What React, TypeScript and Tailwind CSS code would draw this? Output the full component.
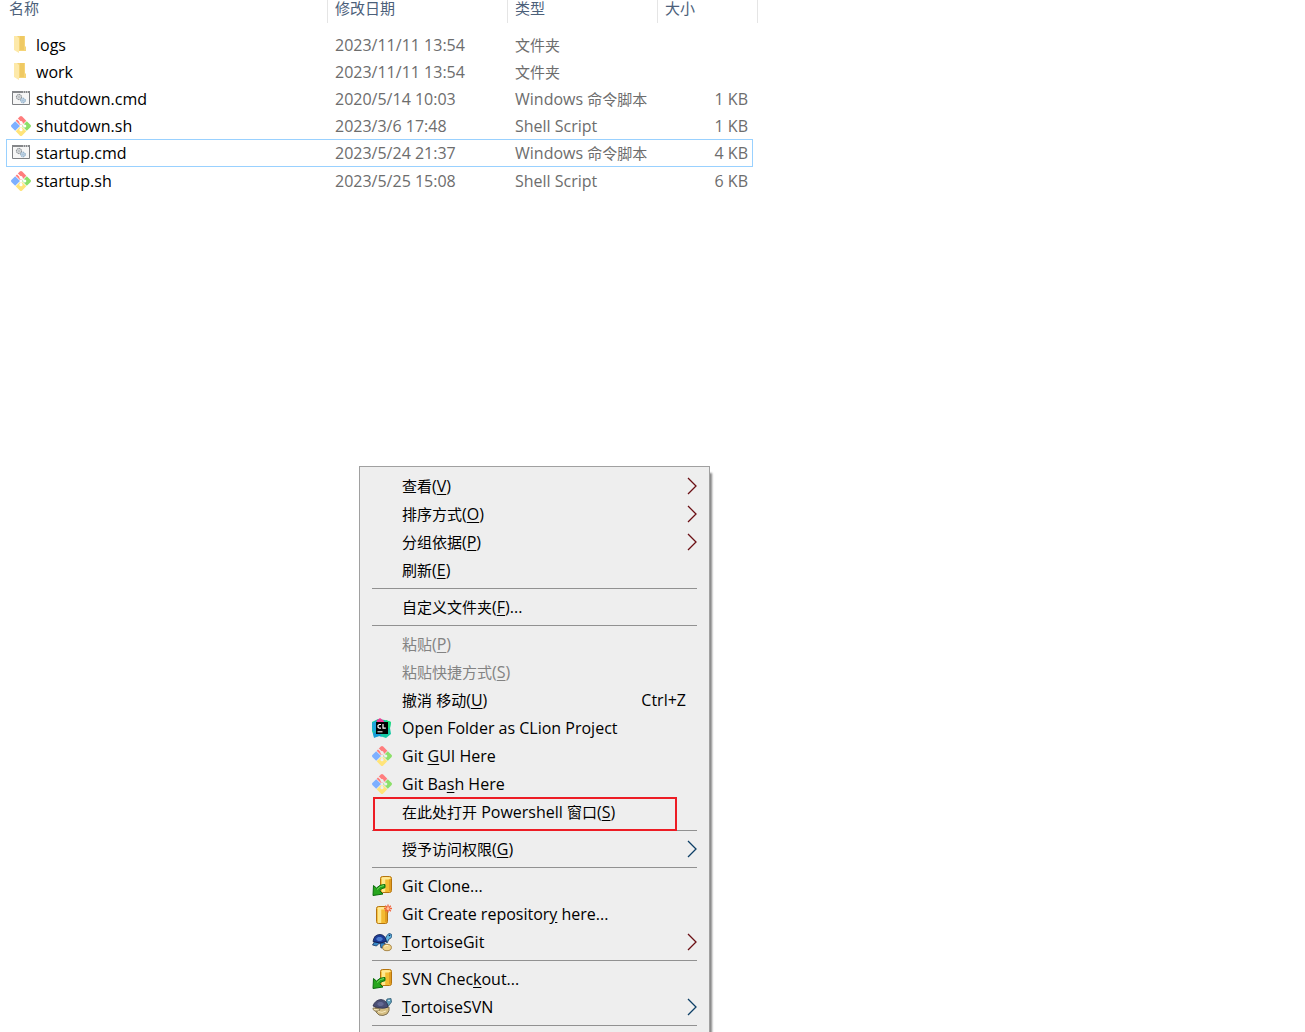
import React from "react";

type IconName = "folder" | "cmd" | "git" | "clion" | "clone" | "create" | "tortoisegit" | "tortoisesvn";

interface FileEntry {
    icon: IconName;
    name: string;
    date: string;
    type: string;
    size: string;
    selected?: boolean;
}

interface MenuEntry {
    // "&" marks the access key
    label: string;
    icon?: IconName;
    shortcut?: string;
    submenu?: "red" | "blue";
    disabled?: boolean;
    highlighted?: boolean;
}

const files: FileEntry[] = [
    { icon: "folder", name: "logs", date: "2023/11/11 13:54", type: "文件夹", size: "" },
    { icon: "folder", name: "work", date: "2023/11/11 13:54", type: "文件夹", size: "" },
    { icon: "cmd", name: "shutdown.cmd", date: "2020/5/14 10:03", type: "Windows 命令脚本", size: "1 KB" },
    { icon: "git", name: "shutdown.sh", date: "2023/3/6 17:48", type: "Shell Script", size: "1 KB" },
    { icon: "cmd", name: "startup.cmd", date: "2023/5/24 21:37", type: "Windows 命令脚本", size: "4 KB", selected: true },
    { icon: "git", name: "startup.sh", date: "2023/5/25 15:08", type: "Shell Script", size: "6 KB" },
];

const menuGroups: MenuEntry[][] = [
    [
        { label: "查看(&V)", submenu: "red" },
        { label: "排序方式(&O)", submenu: "red" },
        { label: "分组依据(&P)", submenu: "red" },
        { label: "刷新(&E)" },
    ],
    [{ label: "自定义文件夹(&F)..." }],
    [
        { label: "粘贴(&P)", disabled: true },
        { label: "粘贴快捷方式(&S)", disabled: true },
        { label: "撤消 移动(&U)", shortcut: "Ctrl+Z" },
        { label: "Open Folder as CLion Project", icon: "clion" },
        { label: "Git &GUI Here", icon: "git" },
        { label: "Git Ba&sh Here", icon: "git" },
        { label: "在此处打开 Powershell 窗口(&S)", highlighted: true },
    ],
    [{ label: "授予访问权限(&G)", submenu: "blue" }],
    [
        { label: "Git Clone...", icon: "clone" },
        { label: "Git Create repositor&y here...", icon: "create" },
        { label: "&TortoiseGit", icon: "tortoisegit", submenu: "red" },
    ],
    [
        { label: "SVN Chec&kout...", icon: "clone" },
        { label: "&TortoiseSVN", icon: "tortoisesvn", submenu: "blue" },
    ],
];

const FolderIcon = () => (
    <svg width="20" height="20" viewBox="0 0 20 20" aria-hidden="true">
        <path d="M5 1h9v10l1 1v4H5z" fill="#f5d477" />
        <path d="M9 1h4v14H9z" fill="#efc963" />
        <path d="M3 1h3l2 2v15l-5-3z" fill="#fde9a9" />
    </svg>
);

const CmdIcon = () => (
    <svg width="20" height="20" viewBox="0 1 20 20" aria-hidden="true">
        <path d="M1.5 3.5h17v13h-17z" fill="#f6f6f6" stroke="#7d7f82" />
        <path d="M1 3h18v2H1z" fill="#85878a" />
        <path d="M12 4h1M14 4h1M16 4h1" stroke="#fff" />
        <circle cx="8" cy="9" r="2.6" fill="#dfe3e6" stroke="#777c80" strokeDasharray="1.4 .6" />
        <circle cx="8" cy="9" r="1" fill="#fff" stroke="#8b9094" strokeWidth=".6" />
        <circle cx="12" cy="12.5" r="2.3" fill="#d3e4f2" stroke="#6f94b5" strokeDasharray="1.3 .6" />
        <circle cx="12" cy="12.5" r=".8" fill="#fff" stroke="#6f94b5" strokeWidth=".6" />
    </svg>
);

const GitIcon = () => (
    <svg width="20" height="20" viewBox="0 0 20 20" aria-hidden="true">
        <mask id="git-branch">
            <path d="M0 0h20v20H0z" fill="#fff" />
            <path d="M6 2.500 10 6.500v7.500M10 6.500l4 4" fill="none" stroke="#000" strokeWidth="1.200" />
            <circle cx="10" cy="6.500" r="1.600" />
            <circle cx="10" cy="13.700" r="1.600" />
            <circle cx="13.700" cy="10" r="1.600" />
        </mask>
        <g mask="url(#git-branch)">
            <path d="M8.800.6q1.200-1.200 2.400 0L15.300 4.700 11 9H9L4.700 4.700z" fill="#ff7d7d" />
            <path d="M4.200 5.200 9 10l-4.800 4.800L.6 11.200q-1.200-1.200 0-2.400z" fill="#7eb0ff" />
            <path d="m15.800 5.200 3.600 3.600q1.200 1.200 0 2.400l-3.600 3.600L11 10z" fill="#8ce06a" />
            <path d="M4.700 15.300 9 11h2l4.300 4.300-4.100 4.100q-1.200 1.200-2.400 0z" fill="#ffe47a" />
        </g>
    </svg>
);

const CLionIcon = () => (
    <svg width="20" height="20" viewBox="0 0 20 20" aria-hidden="true">
        <path d="m0 4 6-3 7 1 6 2-1 6 1 6-5 4-6-2-6 1-2-6z" fill="#16c9a4" />
        <path d="m4 3 4-3 4 3v3H5z" fill="#ef3c96" />
        <path d="m0 5 5-2v9l-4 2z" fill="#20a5de" />
        <path d="m14 2 5 2-1 6h-4z" fill="#1fdc7d" />
        <path d="m1 15 5-2 4 6-3-1-5 2z" fill="#179bd8" />
        <path d="M4 4h12v12H4z" fill="#000" />
        <path d="M9 6.5H7.2l-1.2 1v1.7l1.2 1H9M11 6v4.2h2.8" fill="none" stroke="#fff" strokeWidth="1.2" />
        <path d="M5.5 13.8h5" stroke="#fff" />
    </svg>
);

const Cylinder = ({ x, y, height }: { x: number; y: number; height: number }) => (
    <g transform={`translate(${x} ${y})`}>
        <rect x=".5" y=".5" width="11" height={height} rx="2" fill="#f4bb31" stroke="#b5740e" />
        <path d={`M3.500 2v${height - 2}`} stroke="#ffe78c" strokeWidth="3.500" />
        <path d={`M10 3v${height - 4}`} stroke="#d9901a" strokeWidth="1.4" />
        <ellipse cx="6" cy="2.2" rx="4.6" ry="1.3" fill="#ffe995" />
    </g>
);

const CloneIcon = () => (
    <svg width="20" height="20" viewBox="0 0 20 20" aria-hidden="true">
        <Cylinder x={8} y={0} height={16} />
        <path
            d="m1.5 9.5 3 2.6q3-3.800 8.500-3.600v3.200q-3.500.2-5.300 3l3.300 3.300-10 1.500z"
            fill="#27a61d"
            stroke="#0a6c0b"
        />
        <path d="M5 13.500q3-3.800 7-4" fill="none" stroke="#7bdc5f" />
    </svg>
);

const CreateIcon = () => (
    <svg width="20" height="20" viewBox="0 0 20 20" aria-hidden="true">
        <Cylinder x={4} y={2} height={17} />
        <path d="M16 .5v8M12 4.500h8M13.200 1.700l5.600 5.600M18.800 1.700l-5.600 5.600" stroke="#f0643c" strokeWidth="1.3" />
        <circle cx="16" cy="4.5" r="1.5" fill="#ffc4a0" />
    </svg>
);

const TortoiseGitIcon = () => (
    <svg width="20" height="20" viewBox="0 0 20 20" aria-hidden="true">
        <path d="m3 9-2.500 4 4 1 3-3zM8 11l1 5 4-1v-4z" fill="#3586c5" stroke="#15345f" strokeWidth=".8" />
        <path d="M13 8q1-5 4-6.500 3 0 3 2.500-1 3-3 3l-2 4z" fill="#63b7e0" stroke="#17406f" strokeWidth=".8" />
        <path d="M1 9.500q1-7 7-7 5 0 6.500 7Q8 12.500 1 9.500z" fill="#1c3c96" stroke="#0b1643" strokeWidth=".8" />
        <path d="m4 7 2-2h3l2 2-2 2H6z" fill="#4a7bd0" />
        <circle cx="17.500" cy="3.500" r=".8" fill="#102040" />
        <ellipse cx="15" cy="15.5" rx="4.400" ry="3.200" fill="#f2d58d" stroke="#97712d" strokeWidth=".8" />
        <path d="M12.500 14.500q1.500-1.500 3.500-1" fill="none" stroke="#fff2c6" />
    </svg>
);

const TortoiseSvnIcon = () => (
    <svg width="20" height="20" viewBox="0 0 20 20" aria-hidden="true">
        <path d="M3 10h14q1 4-2 7-4 2.500-8 1-4-2-4-8z" fill="#d4bd83" stroke="#685a3d" strokeWidth=".8" />
        <path d="M1 11q-.5 2 2 3h4l1-2z" fill="#f0e0b0" stroke="#7c6a42" strokeWidth=".8" />
        <path d="m14 5 1-3 4-.5.5 3.500-3 4z" fill="#5c9eb9" stroke="#315c75" strokeWidth=".8" />
        <path d="M1 9q2-6 8-6.500Q15 3 16 10q-6 3-15-1z" fill="#4a4f75" stroke="#292c49" strokeWidth=".8" />
        <path d="m5 7 2-2h3l2 2-2 2H7z" fill="#646a94" />
        <path d="M6 14.500q4 2 8-.5" fill="none" stroke="#f7e9bd" />
        <circle cx="17" cy="3.5" r=".8" fill="#fff" />
    </svg>
);

const icons: Record<IconName, React.FC> = {
    folder: FolderIcon,
    cmd: CmdIcon,
    git: GitIcon,
    clion: CLionIcon,
    clone: CloneIcon,
    create: CreateIcon,
    tortoisegit: TortoiseGitIcon,
    tortoisesvn: TortoiseSvnIcon,
};

// Chinese runs are set one pixel smaller than the Latin text around them
const Mixed = ({ text }: { text: string }) => (
    <>
        {text.split(/([\u4e00-\u9fff]+)/).map((part, i) =>
            i % 2 ? <span key={i} className="text-[15px]">{part}</span> : part
        )}
    </>
);

const MenuLabel = ({ label }: { label: string }) => {
    const at = label.indexOf("&");
    if (at < 0) return <Mixed text={label} />;
    return (
        <>
            <Mixed text={label.slice(0, at)} />
            <span className="underline underline-offset-2">{label[at + 1]}</span>
            {label.slice(at + 2)}
        </>
    );
};

const FileList = () => (
    <table className="ml-[6px] w-[752px] table-fixed border-separate border-spacing-0 text-left leading-5 text-[#6d6d6d]">
        <colgroup>
            <col className="w-[322px]" />
            <col className="w-[180px]" />
            <col className="w-[150px]" />
            <col className="w-[95px]" />
            <col className="w-[5px]" />
        </colgroup>
        <thead className="text-[15px] text-[#4c607a]">
            <tr className="h-[23px] align-top">
                <th className="border-r border-[#e5e5e5] pl-[3px] font-normal leading-4">名称</th>
                <th className="border-r border-[#e5e5e5] pl-[7px] font-normal leading-4">修改日期</th>
                <th className="border-r border-[#e5e5e5] pl-[7px] font-normal leading-4">类型</th>
                <th colSpan={2} className="border-r border-[#e5e5e5] pl-[7px] font-normal leading-4">大小</th>
            </tr>
        </thead>
        <tbody>
            <tr className="h-2" aria-hidden="true">
                <td colSpan={5} />
            </tr>
            {files.map((file) => {
                const Icon = icons[file.icon];
                const edge = file.selected ? "border-y border-[#99d1ff]" : "";
                return (
                    <tr key={file.name} className={file.selected ? "h-7" : "h-[27px]"}>
                        <td className={`${edge} ${file.selected ? "border-l pl-1" : "pl-[5px]"} text-black`}>
                            <span className="flex items-center gap-[5px]">
                                <Icon />
                                {file.name}
                            </span>
                        </td>
                        <td className={`${edge} pl-[7px]`}>{file.date}</td>
                        <td className={`${edge} pl-[7px]`}>
                            <Mixed text={file.type} />
                        </td>
                        <td className={`${edge} ${file.selected ? "border-r pr-1" : "pr-[5px]"} text-right`}>{file.size}</td>
                        <td />
                    </tr>
                );
            })}
        </tbody>
    </table>
);

const MenuItem = ({ item }: { item: MenuEntry }) => {
    const Icon = item.icon ? icons[item.icon] : null;
    return (
        <li role="none" className="relative">
            <button
                type="button"
                role="menuitem"
                disabled={item.disabled}
                aria-haspopup={item.submenu ? "menu" : undefined}
                className="flex h-7 w-full items-center px-3 text-left leading-5 text-black disabled:text-[#838383]"
            >
                <span className="mr-[10px] h-5 w-5 shrink-0">{Icon && <Icon />}</span>
                <span className="flex-1 whitespace-nowrap">
                    <MenuLabel label={item.label} />
                </span>
                {item.shortcut && <span className="pr-[11px]">{item.shortcut}</span>}
                {item.submenu && (
                    <svg width="10" height="18" viewBox="0 0 10 18" fill="none" aria-hidden="true">
                        <path
                            d="m1 1 8 8-8 8"
                            stroke={item.submenu === "red" ? "#6b0f14" : "#0d3f66"}
                            strokeWidth="1.3"
                        />
                    </svg>
                )}
            </button>
            {item.highlighted && (
                <span className="pointer-events-none absolute -top-px left-[13px] right-8 z-10 h-[34px] border-2 border-[#ed1c24]" />
            )}
        </li>
    );
};

const ContextMenu = () => (
    <div
        role="menu"
        className="absolute left-[359px] top-[466px] w-[351px] border border-[#a0a0a0] bg-[#eeeeee] py-[5px] shadow-[3px_6px_2px_-1px_#858585]"
    >
        {menuGroups.map((group, i) => (
            <React.Fragment key={i}>
                <ul role="none">
                    {group.map((item) => (
                        <MenuItem key={item.label} item={item} />
                    ))}
                </ul>
                <hr className="mx-3 my-1 border-[#919191]" />
            </React.Fragment>
        ))}
    </div>
);

const App: React.FC = () => {
    return (
        <main className="relative h-screen overflow-hidden bg-white font-['Open_Sans','Noto_Sans_CJK_SC',sans-serif] text-[16px]">
            <FileList />
            <ContextMenu />
        </main>
    );
};

export default App;
